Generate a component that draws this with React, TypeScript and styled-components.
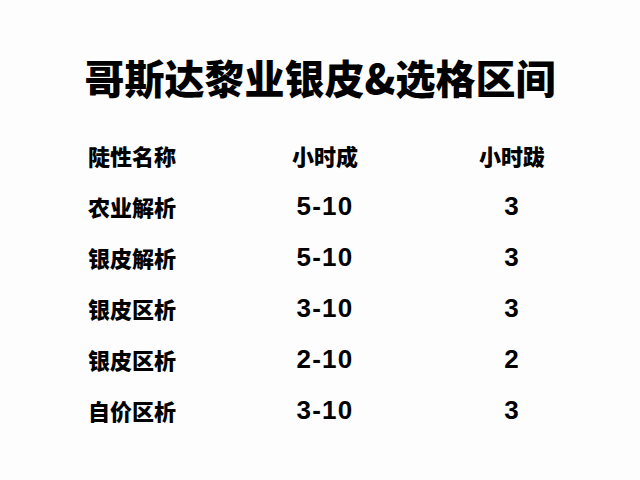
import React from "react";
import styled, { createGlobalStyle } from "styled-components";

const Global = createGlobalStyle`
  html, body { margin: 0; padding: 0; background: #fdfdfd; }
  body { font-family: "Noto Sans CJK SC", "Liberation Sans", sans-serif; color: #111; }
`;

const Page = styled.div`
  width: 640px;
  height: 480px;
  display: flex;
  flex-direction: column;
  background: #fdfdfd;
`;

const Title = styled.h1`
  margin: 0;
  padding-top: 52px;
  height: 50px;
  line-height: 50px;
  text-align: center;
  font-family: "Noto Sans CJK SC", sans-serif;
  font-weight: 900;
  font-size: 40px;
  color: #000;
`;

const Table = styled.div`
  display: grid;
  grid-template-columns: 150px 174px 200px;
  grid-auto-rows: 51px;
  padding-left: 88px;
  margin-top: 27px;
  align-items: center;
`;

const Cell = styled.div<{ $align: "left" | "center"; $num?: boolean }>`
  text-align: ${(p) => p.$align};
  font-family: ${(p) =>
    p.$num ? `"Liberation Sans", Arial, sans-serif` : `"Noto Sans CJK SC", sans-serif`};
  font-weight: ${(p) => (p.$num ? 700 : 900)};
  font-size: ${(p) => (p.$num ? "26px" : "22px")};
  letter-spacing: ${(p) => (p.$num ? "1.2px" : "0px")};
  color: #000;
  line-height: 1;
`;

const header = ["陡性名称", "小时成", "小时跋"];
const rows = [
  ["农业解析", "5-10", "3"],
  ["银皮解析", "5-10", "3"],
  ["银皮区析", "3-10", "3"],
  ["银皮区析", "2-10", "2"],
  ["自价区析", "3-10", "3"],
];

export default function App() {
  return (
    <Page>
      <Global />
      <Title>哥斯达黎业银皮&amp;选格区间</Title>
      <Table>
        {header.map((h, i) => (
          <Cell key={i} $align={i === 0 ? "left" : "center"}>
            {h}
          </Cell>
        ))}
        {rows.map((r, ri) =>
          r.map((c, ci) => (
            <Cell key={`${ri}-${ci}`} $align={ci === 0 ? "left" : "center"} $num={ci > 0}>
              {c}
            </Cell>
          ))
        )}
      </Table>
    </Page>
  );
}
